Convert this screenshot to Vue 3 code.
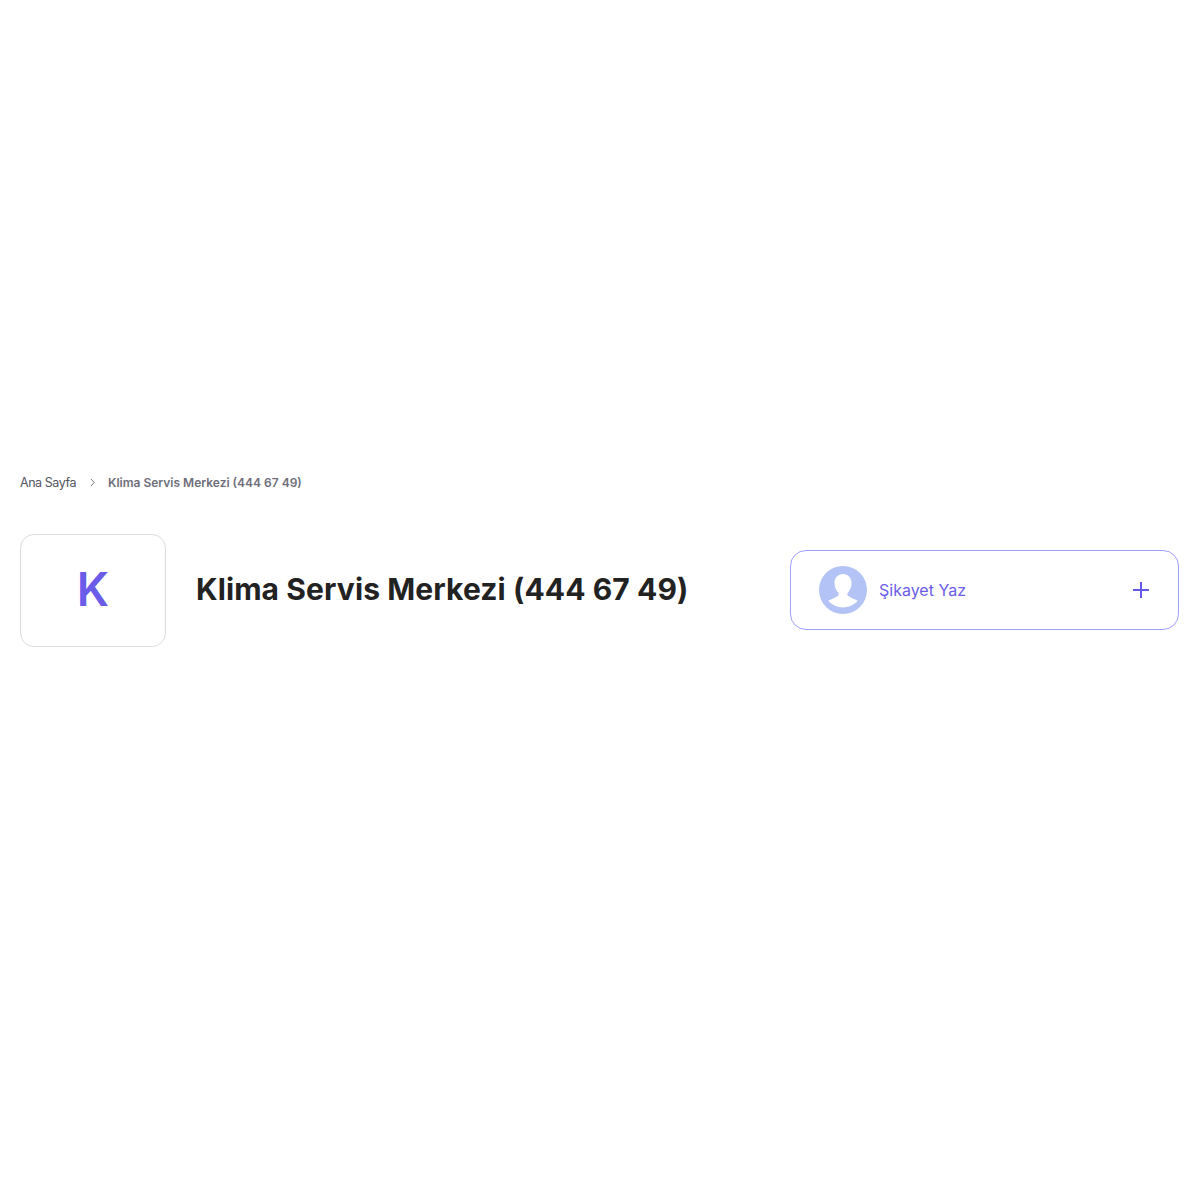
<template>
  <div class="page">
    <nav class="crumbs">
      <a class="crumb-home">Ana Sayfa</a>
      <svg class="crumb-sep" width="7" height="9" viewBox="0 0 7 9" fill="none">
        <path d="M2 1l3.200 3.500L2 8" stroke="#7a7a85" stroke-width="1" />
      </svg>
      <span class="crumb-current">{{ title }}</span>
    </nav>

    <div class="head">
      <div class="letter-box">{{ title[0] }}</div>
      <h1 class="title">{{ title }}</h1>
      <button class="complain">
        <svg class="avatar" width="48" height="48" viewBox="0 0 48 48">
          <defs>
            <clipPath id="avatar-clip"><circle cx="24" cy="22" r="19.500" /></clipPath>
          </defs>
          <circle cx="24" cy="24" r="24" fill="#b3c3f5" />
          <path clip-path="url(#avatar-clip)" fill="#fff"
                d="M18.500 30c-2 1.800-6 2.800-10.500 5.500V48h32V35.500c-4.500-2.700-8.500-3.700-10.500-5.500z" />
          <path fill="#fff"
                d="M24 8c-5 0-8.500 3.700-8.500 9 0 4 1.700 7.500 3.500 9.500 1 1.200 1 3-.5 4h11c-1.500-1-1.500-2.800-.5-4 1.800-2 3.500-5.500 3.500-9.500 0-5.300-3.500-9-8.500-9z" />
        </svg>
        <span class="complain-text">Şikayet Yaz</span>
        <svg class="plus" width="18" height="18" viewBox="0 0 18 18" fill="none">
          <path d="M9 1v16M1 9h16" stroke="#6458e6" stroke-width="2" />
        </svg>
      </button>
    </div>
  </div>
</template>

<script setup>
const title = 'Klima Servis Merkezi (444 67 49)'
</script>

<style>
html, body {
  background: #fff;
}
</style>

<style scoped>
.page {
  box-sizing: border-box;
  height: 1200px;
  padding: 473px 21px 0 20px;
  font-family: "Inter", "Liberation Sans", sans-serif;
}

.crumbs {
  display: flex;
  align-items: center;
  height: 18px;
}

.crumb-home {
  width: 55px;
  color: #55555f;
  font-size: 12.500px;
  letter-spacing: -0.450px;
  white-space: nowrap;
}

.crumb-sep {
  margin-left: 14px;
}

.crumb-current {
  margin-left: 12px;
  color: #6e6e7a;
  font-size: 12px;
  font-weight: 600;
  white-space: nowrap;
}

.head {
  display: flex;
  align-items: center;
  margin-top: 43px;
}

.letter-box {
  box-sizing: border-box;
  display: flex;
  align-items: center;
  justify-content: center;
  flex: none;
  width: 146px;
  height: 113px;
  padding-bottom: 3px;
  border: 1px solid #dcdce0;
  border-radius: 14px;
  color: #6a5ce8;
  font-size: 46px;
  font-weight: 600;
}

.title {
  flex: 1;
  margin: 0 0 4px 30px;
  color: #222;
  font-size: 30px;
  font-weight: 700;
  letter-spacing: 0.1px;
  white-space: nowrap;
}

.complain {
  box-sizing: border-box;
  display: flex;
  align-items: center;
  flex: none;
  width: 389px;
  height: 80px;
  margin-bottom: 2px;
  padding: 0 18px 0 28px;
  border: 1px solid #a0a0fd;
  border-radius: 16px;
  background: #fff;
  font-family: inherit;
}

.complain-text {
  flex: 1;
  margin-left: 12px;
  color: #6a5ce8;
  font-size: 16px;
  text-align: left;
}

.plus {
  margin-right: 10px;
}
</style>
